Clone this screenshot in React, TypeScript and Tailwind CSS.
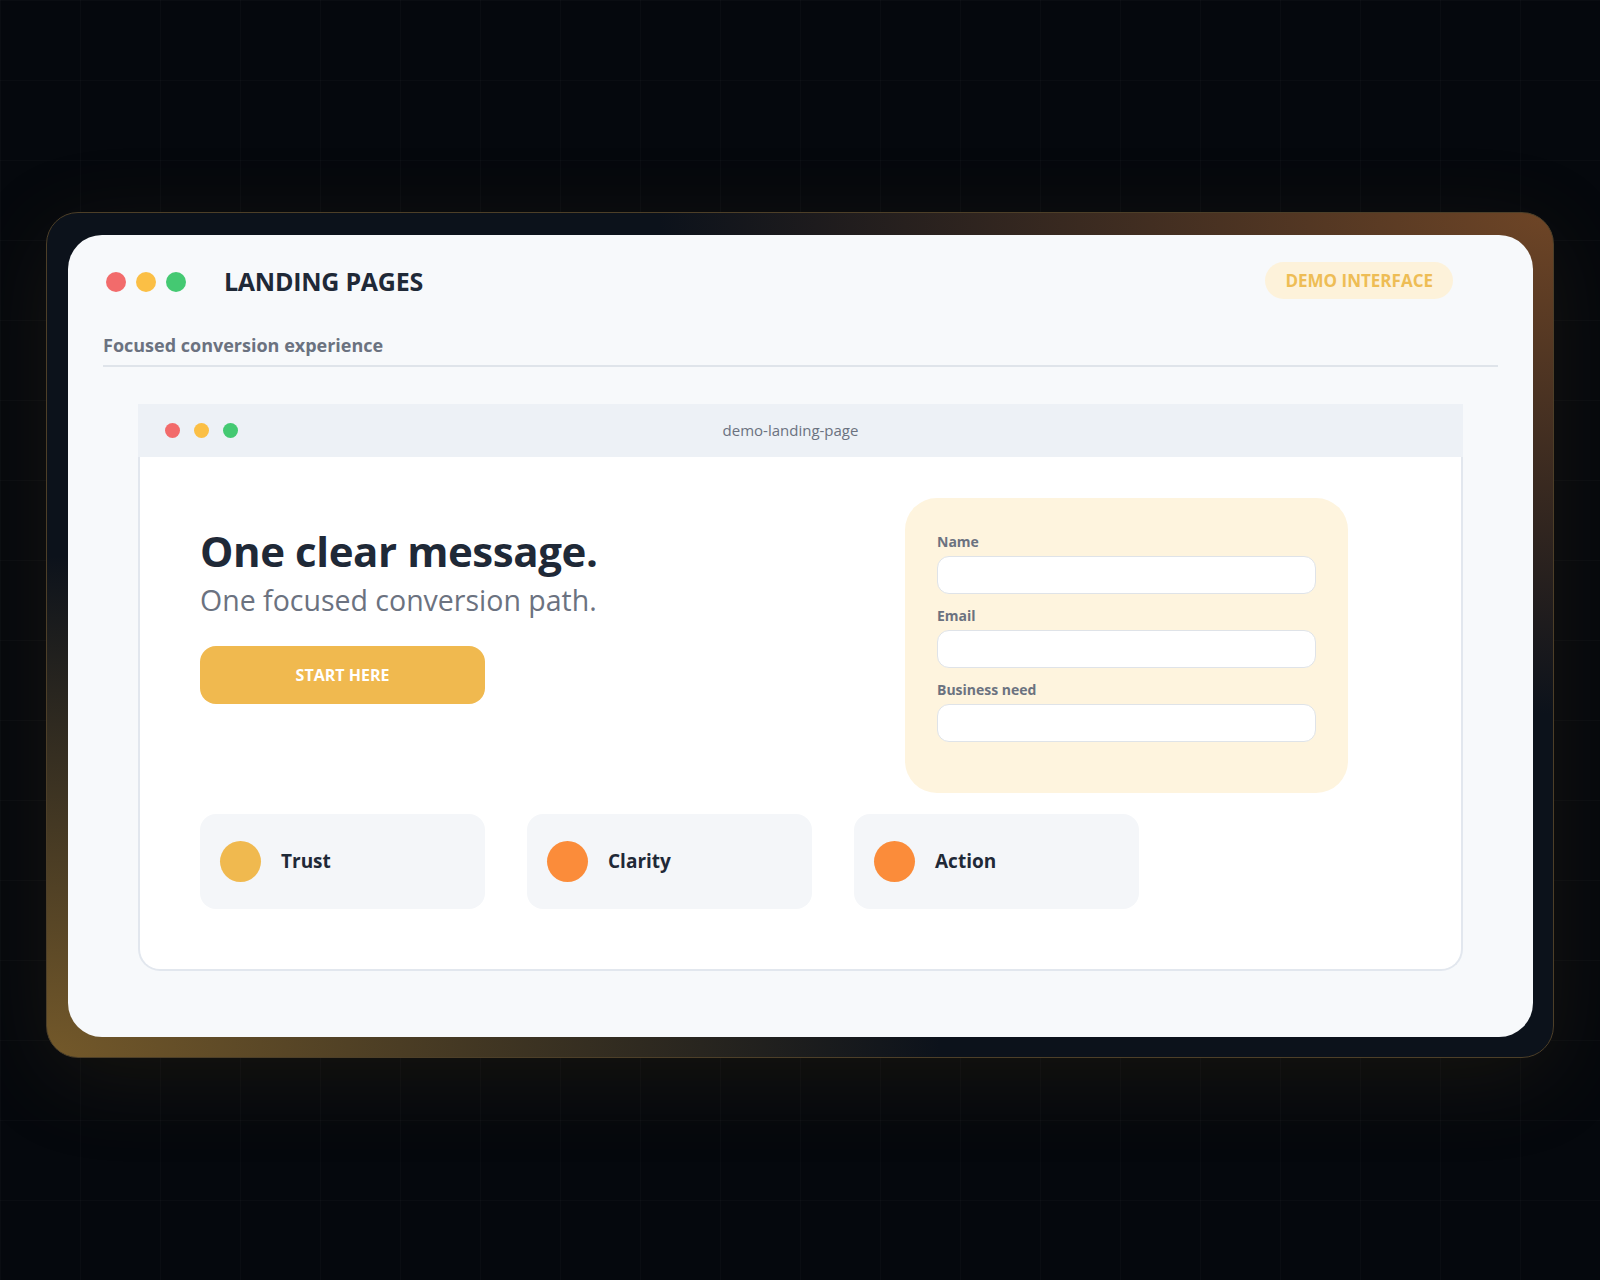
import React from 'react';

const font = { fontFamily: '"Open Sans", "Noto Sans", sans-serif' };

function Field({ label }: { label: string }) {
  return (
    <div>
      <div className="text-[14px] leading-[20px] font-bold text-[#6b7280]">{label}</div>
      <div className="mt-[4px] h-[38px] w-full rounded-[12px] border border-[#dfe3e8] bg-white" />
    </div>
  );
}

function Feature({ label, color }: { label: string; color: string }) {
  return (
    <div className="flex h-[95px] w-[285px] items-center gap-[20px] rounded-[16px] bg-[#f4f6f9] pl-[20px]">
      <div className={`h-[41px] w-[41px] rounded-full ${color}`} />
      <span className="text-[19px] font-bold text-[#1f2937]">{label}</span>
    </div>
  );
}

export default function App() {
  return (
    <div
      className="h-[1280px] w-full overflow-hidden bg-[#05080d] bg-[linear-gradient(to_right,rgba(255,255,255,0.02)_1px,transparent_1px),linear-gradient(to_bottom,rgba(255,255,255,0.02)_1px,transparent_1px)] bg-[size:80px_80px] pl-[46px] pt-[212px]"
      style={font}
    >
      {/* Outer glowing shell */}
      <div className="h-[846px] w-[1508px] rounded-[32px] border border-[#4d3f28] bg-[radial-gradient(ellipse_at_top_right,#6e4526_0%,transparent_42%),radial-gradient(ellipse_at_bottom_left,#74592a_0%,transparent_42%),linear-gradient(#0c121b,#0c121b)] pl-[21px] pt-[22px] shadow-[0_20px_90px_rgba(120,90,30,0.16)]">
        {/* Main card */}
        <div className="h-[802px] w-[1465px] rounded-[34px] bg-[#f7f9fb] px-[35px] pt-[27px]">
          {/* Header */}
          <div className="flex h-[37px] items-center pr-[45px]">
            <div className="flex items-center gap-[10px] pl-[3px] pt-[3px]">
              <span className="h-[20px] w-[20px] rounded-full bg-[#f26b6b]" />
              <span className="h-[20px] w-[20px] rounded-full bg-[#fbbf45]" />
              <span className="h-[20px] w-[20px] rounded-full bg-[#44c972]" />
            </div>
            <h1 className="ml-[38px] pt-[3px] text-[25px] font-bold tracking-[-0.01em] text-[#1f2937]">LANDING PAGES</h1>
            <div className="ml-auto flex h-[37px] items-center rounded-full bg-[#fdf2da] px-[20px] text-[17px] font-bold text-[#eebd55]">
              DEMO INTERFACE
            </div>
          </div>

          <div className="mt-[34px] border-b-2 border-[#dfe4ea] pb-[8px] text-[18px] leading-[24px] font-bold text-[#6b7280]">
            Focused conversion experience
          </div>

          {/* Browser mockup */}
          <div className="ml-[35px] mt-[37px] w-[1325px]">
            <div className="flex h-[53px] items-center bg-[#edf1f6] pl-[27px]">
              <div className="flex items-center gap-[14px]">
                <span className="h-[15px] w-[15px] rounded-full bg-[#f26b6b]" />
                <span className="h-[15px] w-[15px] rounded-full bg-[#fbbf45]" />
                <span className="h-[15px] w-[15px] rounded-full bg-[#44c972]" />
              </div>
              <div className="flex-1 text-center text-[15px] text-[#6b7280]">demo-landing-page</div>
              <div className="w-[120px]" />
            </div>

            <div className="rounded-b-[22px] border-2 border-t-0 border-[#e2e7ee] bg-white pb-[60px] pl-[60px] pr-[113px] pt-[41px]">
              <div className="flex">
                <div className="flex-1 pt-[29px]">
                  <h2 className="text-[42px] leading-[48px] font-bold tracking-[-0.01em] text-[#1f2937]">One clear message.</h2>
                  <p className="mt-[6px] text-[28.5px] leading-[38px] text-[#6b7280]">One focused conversion path.</p>
                  <button className="mt-[27px] flex h-[58px] w-[285px] items-center justify-center rounded-[16px] bg-[#f0b94f] text-[16px] font-bold text-white">
                    START HERE
                  </button>
                </div>

                <div className="h-[295px] w-[443px] rounded-[32px] bg-[#fef4de] px-[32px] pt-[34px]">
                  <div className="flex flex-col gap-[12px]">
                    <Field label="Name" />
                    <Field label="Email" />
                    <Field label="Business need" />
                  </div>
                </div>
              </div>

              <div className="mt-[21px] flex gap-[42px]">
                <Feature label="Trust" color="bg-[#f0b94f]" />
                <Feature label="Clarity" color="bg-[#fb8c3a]" />
                <Feature label="Action" color="bg-[#fb8c3a]" />
              </div>
            </div>
          </div>
        </div>
      </div>
    </div>
  );
}
